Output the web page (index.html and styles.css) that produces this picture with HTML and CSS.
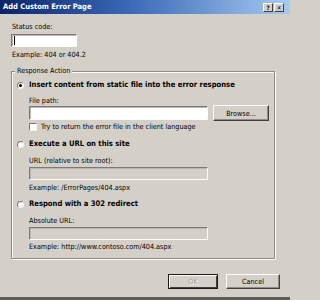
FILE: index.html
```html
<!DOCTYPE html>
<html>
<head>
<meta charset="utf-8">
<link rel="stylesheet" href="styles.css">
</head>
<body>
<div class="window">
  <div class="titlebar">
    <span class="title">Add Custom Error Page</span>
    <div class="tbtns">
      <span class="tbtn">?</span>
      <span class="tbtn">✕</span>
    </div>
  </div>
  <div class="content">
    <div class="label status-label">Status code:</div>
    <div class="textbox status-box"><span class="caret"></span></div>
    <div class="label example-top">Example: 404 or 404.2</div>

    <fieldset class="group">
      <legend>Response Action</legend>

      <div class="radio-row r1"><span class="radio"><span class="dot"></span></span>Insert content from static file into the error response</div>
      <div class="sub">
        <div class="label fp-label">File path:</div>
        <div class="input-row">
          <div class="textbox wide"></div>
          <div class="button browse">Browse...</div>
        </div>
        <div class="check-row"><span class="check"></span>Try to return the error file in the client language</div>
      </div>

      <div class="radio-row r2"><span class="radio"></span>Execute a URL on this site</div>
      <div class="sub">
        <div class="label sub-label">URL (relative to site root):</div>
        <div class="textbox wide disabled"></div>
        <div class="label sub-example">Example: /ErrorPages/404.aspx</div>
      </div>

      <div class="radio-row r3"><span class="radio"></span>Respond with a 302 redirect</div>
      <div class="sub">
        <div class="label sub-label">Absolute URL:</div>
        <div class="textbox wide disabled"></div>
        <div class="label sub-example2">Example: http://www.contoso.com/404.aspx</div>
      </div>
    </fieldset>

    <div class="actions">
      <div class="button ok">OK</div>
      <div class="button cancel">Cancel</div>
    </div>
  </div>
</div>
</body>
</html>
```
FILE: styles.css
```css
* { box-sizing: border-box; }

body {
  margin: 0;
  font-family: "DejaVu Sans Condensed", "DejaVu Sans", sans-serif;
  font-size: 7.2px;
  color: #000;
  background: #d4d0c8;
}

.window {
  width: 290px;
  height: 300px;
  background: #d4d0c8;
  border-bottom: 3px solid #5e5d5a;
  overflow: hidden;
}

.titlebar {
  height: 14px;
  background: linear-gradient(to right, #0a246a 0%, #3a6ab8 45%, #a6caf0 100%);
  display: flex;
  align-items: center;
  justify-content: space-between;
  padding: 0 6px 0 3px;
}

.title {
  color: #fff;
  font-weight: bold;
  font-size: 7.5px;
  line-height: 14px;
  white-space: nowrap;
}

.tbtns {
  display: flex;
  gap: 1px;
}

.tbtn {
  width: 10px;
  height: 9px;
  background: #d4d0c8;
  border: 1px solid;
  border-color: #fff #404040 #404040 #fff;
  font-weight: bold;
  font-size: 6px;
  line-height: 7px;
  text-align: center;
  color: #000;
}

.content {
  padding: 0 15px 0 11px;
}

.label {
  line-height: 10px;
  white-space: nowrap;
}

.status-label {
  margin: 8px 0 0 1px;
}

.textbox {
  height: 13px;
  background: #fff;
  border: 1px solid;
  border-color: #7b7a76 #fbfbfa #fbfbfa #7b7a76;
  box-shadow: inset 1px 1px 0 #b8b6b0;
}

.textbox.disabled {
  background: #d4d0c8;
}

.status-box {
  width: 66px;
  margin-top: 2px;
  padding: 1px 0 0 2px;
}

.caret {
  display: block;
  width: 1px;
  height: 9px;
  background: #000;
}

.example-top {
  margin: 3px 0 0 1px;
}

.group {
  margin: 6px 0 0;
  padding: 0 0 6px;
  min-width: 0;
  border: 1px solid #8e8c86;
  box-shadow: inset 1px 1px 0 #fbfbfa, 1px 1px 0 #fbfbfa;
}

.group legend {
  margin-left: 3px;
  padding: 0 2px;
  line-height: 10px;
  background: #d4d0c8;
}

.radio-row {
  display: flex;
  align-items: center;
  gap: 5px;
  padding-left: 5px;
  line-height: 10px;
  font-size: 7.6px;
  font-weight: bold;
  white-space: nowrap;
}

.r1 { margin-top: 4px; }
.r2 { margin-top: 7px; }
.r3 { margin-top: 6px; }

.radio {
  width: 7px;
  height: 7px;
  border-radius: 50%;
  background: #fff;
  border: 1px solid;
  border-color: #7b7a76 #f4f4f2 #f4f4f2 #7b7a76;
  display: flex;
  align-items: center;
  justify-content: center;
  flex: none;
}

.dot {
  width: 3px;
  height: 3px;
  border-radius: 50%;
  background: #000;
}

.sub {
  padding-left: 17px;
}

.fp-label { margin-top: 6px; }

.input-row {
  display: flex;
  align-items: center;
  gap: 5px;
  height: 14px;
}

.wide {
  width: 179px;
}

.input-row .wide {
  height: 14px;
}

.button {
  background: #d4d0c8;
  border: 1px solid;
  border-color: #fbfbfa #404040 #404040 #fbfbfa;
  box-shadow: inset -1px -1px 0 #8e8c86;
  display: flex;
  align-items: center;
  justify-content: center;
  white-space: nowrap;
}

.browse {
  width: 56px;
  height: 16px;
}

.check-row {
  display: flex;
  align-items: center;
  gap: 4px;
  margin-top: 2px;
  line-height: 10px;
  white-space: nowrap;
}

.check {
  width: 8px;
  height: 8px;
  background: #fff;
  border: 1px solid;
  border-color: #7b7a76 #f4f4f2 #f4f4f2 #7b7a76;
  flex: none;
}

.sub-label { margin-top: 7px; }
.sub .textbox.disabled { margin-top: 1px; }
.sub-example { margin-top: 3px; }
.sub-example2 { margin-top: 2px; }

.actions {
  display: flex;
  justify-content: flex-end;
  gap: 8px;
  margin: 15px -5px 0 0;
}

.ok {
  width: 50px;
  height: 15px;
  color: #a09e98;
  text-shadow: 1px 1px 0 #fbfbfa;
  border-color: #1a1a1a;
  box-shadow: inset 1px 1px 0 #fbfbfa, inset -1px -1px 0 #404040;
}

.cancel {
  width: 54px;
  height: 15px;
}
```
